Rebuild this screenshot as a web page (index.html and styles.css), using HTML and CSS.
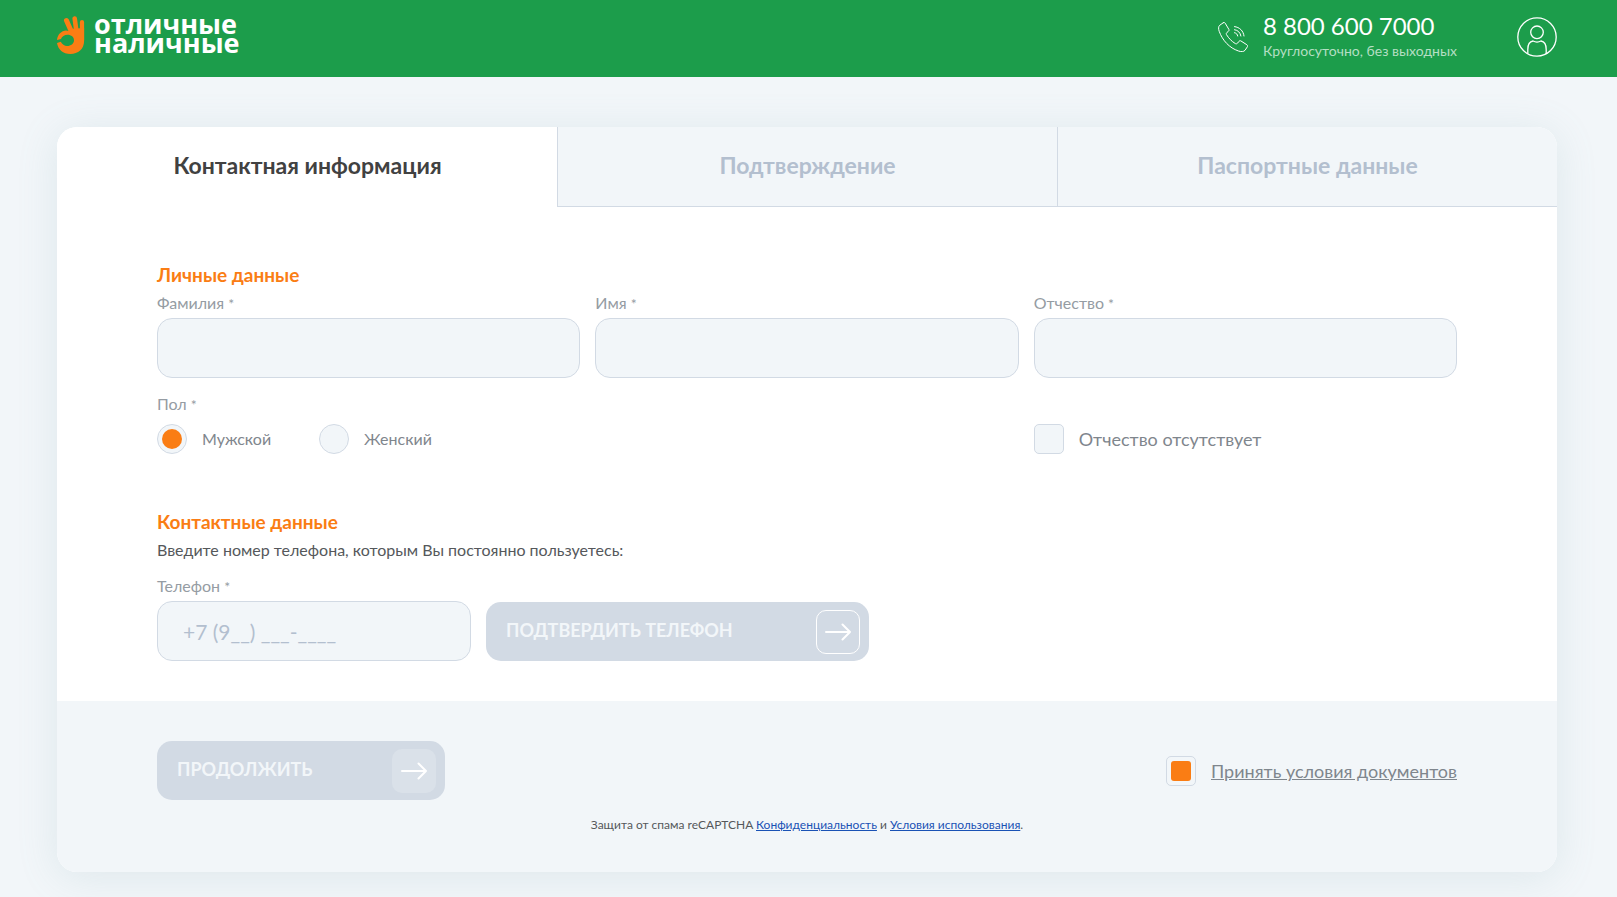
FILE: index.html
```html
<!DOCTYPE html>
<html lang="ru">
<head>
<meta charset="utf-8">
<meta name="viewport" content="width=device-width, initial-scale=1">
<title>Отличные наличные</title>
<link rel="stylesheet" href="styles.css">
</head>
<body>
<header class="header">
  <a class="logo" href="#">
    <svg class="logo-hand" width="28" height="38" viewBox="0 0 28 38" aria-hidden="true">
      <g fill="none" stroke="#fa7d14" stroke-linecap="round">
        <path d="M9.500 4.500 L15 17" stroke-width="5"/>
        <path d="M17.700 2.500 L19.500 16" stroke-width="4.600"/>
        <path d="M25 6 V24" stroke-width="4.200"/>
      </g>
      <path fill="#fa7d14" fill-rule="evenodd" d="M11 13 L27.100 12 V25 C27.100 33 21 38 13.500 38 C6 38 1 33.500 0 27 L3.800 25.800 C5 28.500 7.500 30 10 30 C14 30 17 27.500 17 24.200 C17 21 14.200 18.800 10.600 18.800 C7.500 18.800 4.800 20.400 4 23 L0 24 C0.500 18.500 4.500 15 9 14.600 L14.500 15.500 Z"/>
    </svg>
    <span class="logo-text">отличные<br>наличные</span>
  </a>
  <div class="contacts">
    <svg class="phone-icon" width="30" height="30" viewBox="0 0 30 30" fill="none" stroke="#fff" stroke-linecap="round" stroke-linejoin="round" aria-hidden="true">
      <path d="M5.200 .8 L1.800 3.200 C.2 4.500 .4 7 1.200 9.300 C4.500 18.500 11.500 26 20.500 29 C23.500 30 25.700 29.800 27 28.300 L29.300 24.900 C29.800 24.100 29.600 23.300 28.900 22.800 L23 19 C22.300 18.500 21.500 18.700 21 19.300 L19.500 21.200 C18.800 22 18 22 17.200 21.500 C13.500 19.200 10.800 16.300 8.600 12.800 C8.100 12 8.100 11.200 8.900 10.500 L10.500 9.200 C11.100 8.700 11.200 8 10.800 7.300 L7.200 1.200 C6.700 .4 5.900 .3 5.200 .8 Z"/>
      <path d="M16.500 10.700 C18.400 11.100 19.400 12.200 19.700 14"/>
      <path d="M16.500 7.700 C20 8.200 22.300 10.500 22.900 14"/>
      <path d="M16.500 4.600 C21.600 5.200 25.400 8.800 26 14"/>
    </svg>
    <div class="phone">
      <a class="phone-number" href="tel:88006007000">8 800 600 7000</a>
      <span class="phone-note">Круглосуточно, без выходных</span>
    </div>
    <a class="profile" href="#" aria-label="Личный кабинет">
      <svg width="40" height="40" viewBox="0 0 40 40" fill="none" stroke="#fff" stroke-width="1.300" aria-hidden="true">
        <circle cx="20" cy="20" r="19.200"/>
        <circle cx="20" cy="15.300" r="6.300"/>
        <path d="M10.800 36.700 V32.500 C10.800 27.500 12.500 24.500 16 24 C18.500 25.300 21.500 25.300 24 24 C27.500 24.500 29.200 27.500 29.200 32.500 V36.700"/>
      </svg>
    </a>
  </div>
</header>
<main class="main">
  <form class="card">
    <nav class="tabs">
      <h2 class="tab tab-active">Контактная информация</h2>
      <h2 class="tab">Подтверждение</h2>
      <h2 class="tab">Паспортные данные</h2>
    </nav>
    <div class="content">
      <section>
        <h3 class="title">Личные данные</h3>
        <div class="grid">
          <div class="field">
            <label class="label" for="surname">Фамилия <span class="star">*</span></label>
            <input class="input" id="surname" type="text">
          </div>
          <div class="field">
            <label class="label" for="name">Имя <span class="star">*</span></label>
            <input class="input" id="name" type="text">
          </div>
          <div class="field">
            <label class="label" for="patronymic">Отчество <span class="star">*</span></label>
            <input class="input" id="patronymic" type="text">
          </div>
          <div class="gender" role="radiogroup" aria-labelledby="gender-label">
            <span class="label" id="gender-label">Пол <span class="star">*</span></span>
            <div class="radios">
              <label class="choice radio-choice"><input class="mark radio" type="radio" name="gender" checked>Мужской</label>
              <label class="choice radio-choice"><input class="mark radio" type="radio" name="gender">Женский</label>
            </div>
          </div>
          <label class="choice no-patronymic"><input class="mark" type="checkbox">Отчество отсутствует</label>
        </div>
      </section>
      <section class="contact">
        <h3 class="title">Контактные данные</h3>
        <p class="hint">Введите номер телефона, которым Вы постоянно пользуетесь:</p>
        <div class="phone-row">
          <div class="field phone-field">
            <label class="label" for="tel">Телефон <span class="star">*</span></label>
            <input class="input" id="tel" type="tel" placeholder="+7 (9__) ___-____">
          </div>
          <button class="button button-confirm" type="button">
            <span class="button-label">Подтвердить телефон</span>
            <span class="arrow arrow-outline"><svg width="26" height="18" viewBox="0 0 26 18" fill="none" stroke="#fff" stroke-width="2" stroke-linecap="round" stroke-linejoin="round" aria-hidden="true"><path d="M1 9 H25 M17.500 1.500 L25 9 L17.500 16.500"/></svg></span>
          </button>
        </div>
      </section>
    </div>
    <footer class="footer">
      <div class="actions">
        <button class="button button-next" type="button">
          <span class="button-label">Продолжить</span>
          <span class="arrow"><svg width="26" height="18" viewBox="0 0 26 18" fill="none" stroke="#fff" stroke-width="2" stroke-linecap="round" stroke-linejoin="round" aria-hidden="true"><path d="M1 9 H25 M17.500 1.500 L25 9 L17.500 16.500"/></svg></span>
        </button>
        <div class="choice">
          <input class="mark" type="checkbox" id="terms" aria-labelledby="terms-link" checked>
          <a class="terms" id="terms-link" href="#">Принять условия документов</a>
        </div>
      </div>
      <p class="captcha">Защита от спама reCAPTCHA <a href="#">Конфиденциальность</a> и <a href="#">Условия использования</a>.</p>
    </footer>
  </form>
</main>
</body>
</html>
```
FILE: styles.css
```css
* {
  box-sizing: border-box;
}

body {
  margin: 0;
  background: #f2f6f9;
  color: #414141;
  font-family: Lato, "Open Sans", sans-serif;
  font-size: 16px;
  line-height: 20px;
}

h2,
h3,
p {
  margin: 0;
}

.header {
  display: flex;
  align-items: center;
  justify-content: space-between;
  height: 77px;
  padding: 0 60px 4px 57px;
  background: #1c9d4b;
}

.logo {
  display: flex;
  align-items: center;
  gap: 9px;
  padding-bottom: 3px;
  color: #fff;
  text-decoration: none;
}

.logo-text {
  padding-bottom: 4px;
  font-family: "Open Sans", sans-serif;
  font-size: 27px;
  font-weight: 700;
  line-height: 19px;
}

.contacts {
  display: flex;
  align-items: center;
}

.phone {
  display: flex;
  flex-direction: column;
  gap: 2px;
  margin: 0 60px 0 15px;
}

.phone-number {
  color: #fff;
  font-size: 24px;
  line-height: 26px;
  text-decoration: none;
}

.phone-note {
  color: #b4dfc3;
  font-size: 14px;
}

.profile {
  display: flex;
}

.main {
  padding: 50px 60px 50px 57px;
}

.card {
  overflow: hidden;
  border-radius: 20px;
  background: #fff;
  box-shadow: 0 5px 40px rgba(120, 160, 165, 0.16);
}

.tabs {
  display: grid;
  grid-template-columns: repeat(3, 1fr);
}

.tab {
  height: 80px;
  padding: 23px 0;
  border-bottom: 1px solid #d2dae4;
  border-left: 1px solid #d2dae4;
  background: #f2f6f9;
  color: #b3bfcf;
  font-size: 23px;
  font-weight: 700;
  line-height: 30px;
  text-align: center;
}

.tab-active {
  border-color: transparent;
  background: #fff;
  color: #414141;
}

.content {
  padding: 56px 100px 40px;
}

.title {
  color: #fa7d14;
  font-size: 19px;
  font-weight: 700;
  line-height: 24px;
}

.grid {
  display: grid;
  grid-template-columns: repeat(3, 1fr);
  gap: 16px 15px;
  padding-top: 6px;
}

.field {
  display: flex;
  flex-direction: column;
  gap: 4px;
}

.label {
  color: #959ca3;
}

.star {
  font-size: 14px;
}

.input {
  width: 100%;
  height: 60px;
  padding: 0 25px;
  border: 1px solid #d2dae4;
  border-radius: 15px;
  background: #f2f6f9;
  color: #414141;
  font: inherit;
  font-size: 21px;
}

.input::placeholder {
  color: #b3bfcf;
  opacity: 1;
}

.gender {
  grid-column: span 2;
  display: flex;
  flex-direction: column;
  gap: 9px;
}

.radios {
  display: flex;
  gap: 48px;
}

.choice {
  display: flex;
  align-items: center;
  gap: 15px;
  color: #7f868d;
  font-size: 18px;
}

.radio-choice {
  font-size: 16px;
}

.no-patronymic {
  align-self: end;
}

.mark {
  appearance: none;
  flex: none;
  width: 30px;
  height: 30px;
  margin: 0;
  padding: 4px;
  border: 1px solid #d2dae4;
  border-radius: 5px;
  background: #f2f6f9;
}

.mark::before {
  display: block;
  height: 100%;
  border-radius: 3px;
  content: "";
}

.mark:checked::before {
  background: #fa7d14;
}

.radio,
.radio::before {
  border-radius: 50%;
}

.contact {
  padding-top: 56px;
}

.hint {
  padding: 6px 0 16px;
  color: #55585b;
}

.phone-row {
  display: flex;
  align-items: flex-end;
  gap: 15px;
}

.phone-field {
  width: 314px;
}

.button {
  display: flex;
  align-items: center;
  justify-content: space-between;
  height: 59px;
  padding: 0 9px 0 20px;
  border: 0;
  border-radius: 15px;
  background: #d2dae4;
  color: #f2f6f9;
  font: inherit;
  font-size: 18px;
  font-weight: 700;
  text-transform: uppercase;
}

.button-label {
  padding-bottom: 4px;
}

.button-confirm {
  width: 383px;
}

.button-next {
  width: 288px;
}

.arrow {
  display: flex;
  align-items: center;
  justify-content: center;
  width: 44px;
  height: 44px;
  border-radius: 10px;
  background: #dae1e9;
}

.arrow-outline {
  border: 1px solid #fff;
  background: transparent;
}

.footer {
  padding: 40px 100px 37px;
  background: #f2f6f9;
}

.actions {
  display: flex;
  align-items: center;
  justify-content: space-between;
}

.terms {
  color: #7f868d;
}

.captcha {
  padding-top: 15px;
  color: #55585b;
  font-size: 12px;
  text-align: center;
}

.captcha a {
  color: #1a52b5;
}
```
